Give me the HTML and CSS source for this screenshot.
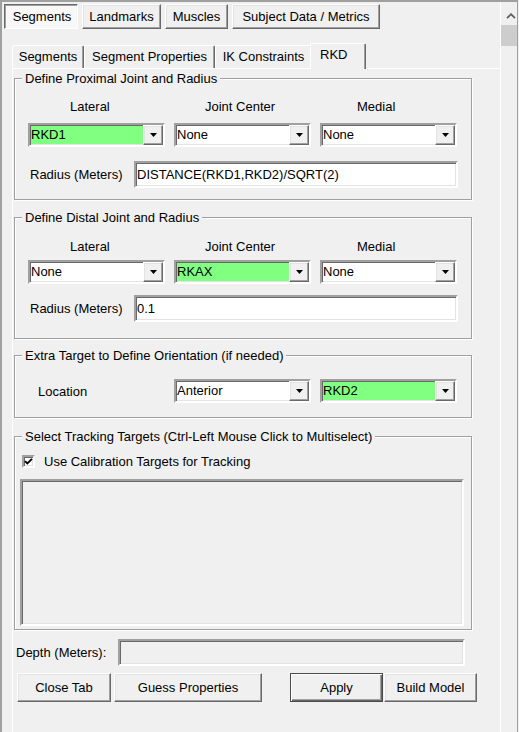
FILE: index.html
```html
<!DOCTYPE html>
<html>
<head>
<meta charset="utf-8">
<title>RKD</title>
<link rel="stylesheet" href="styles.css">
</head>
<body>
<div class="window">
  <div class="content">
    <div class="btn-tabs">
      <div class="btn-tab is-active bt-seg">Segments</div>
      <div class="btn-tab bt-land">Landmarks</div>
      <div class="btn-tab bt-mus">Muscles</div>
      <div class="btn-tab bt-subj">Subject Data / Metrics</div>
    </div>

    <div class="tabctl">
      <div class="tabstrip">
        <div class="tab t-seg">Segments</div>
        <div class="tab t-props">Segment Properties</div>
        <div class="tab t-ik">IK Constraints</div>
        <div class="tab t-rkd is-active">RKD</div>
      </div>

      <div class="page">
        <fieldset class="group g-prox">
          <legend>Define Proximal Joint and Radius</legend>
          <div class="cols heads">
            <span class="head h-lat">Lateral</span>
            <span class="head h-jc">Joint Center</span>
            <span class="head h-med">Medial</span>
          </div>
          <div class="cols combos">
            <div class="combo is-green"><span class="combo-val">RKD1</span><span class="combo-btn"><svg width="7" height="4" viewBox="0 0 7 4"><path d="M0 0H7L3.5 4Z"/></svg></span></div>
            <div class="combo"><span class="combo-val">None</span><span class="combo-btn"><svg width="7" height="4" viewBox="0 0 7 4"><path d="M0 0H7L3.5 4Z"/></svg></span></div>
            <div class="combo"><span class="combo-val">None</span><span class="combo-btn"><svg width="7" height="4" viewBox="0 0 7 4"><path d="M0 0H7L3.5 4Z"/></svg></span></div>
          </div>
          <div class="field-row">
            <span class="field-label">Radius (Meters)</span>
            <div class="textbox">DISTANCE(RKD1,RKD2)/SQRT(2)</div>
          </div>
        </fieldset>

        <fieldset class="group g-dist">
          <legend>Define Distal Joint and Radius</legend>
          <div class="cols heads">
            <span class="head h-lat">Lateral</span>
            <span class="head h-jc">Joint Center</span>
            <span class="head h-med">Medial</span>
          </div>
          <div class="cols combos">
            <div class="combo"><span class="combo-val">None</span><span class="combo-btn"><svg width="7" height="4" viewBox="0 0 7 4"><path d="M0 0H7L3.5 4Z"/></svg></span></div>
            <div class="combo is-green"><span class="combo-val">RKAX</span><span class="combo-btn"><svg width="7" height="4" viewBox="0 0 7 4"><path d="M0 0H7L3.5 4Z"/></svg></span></div>
            <div class="combo"><span class="combo-val">None</span><span class="combo-btn"><svg width="7" height="4" viewBox="0 0 7 4"><path d="M0 0H7L3.5 4Z"/></svg></span></div>
          </div>
          <div class="field-row">
            <span class="field-label">Radius (Meters)</span>
            <div class="textbox">0.1</div>
          </div>
        </fieldset>

        <fieldset class="group g-extra">
          <legend>Extra Target to Define Orientation (if needed)</legend>
          <div class="cols combos">
            <span class="loc-label">Location</span>
            <div class="combo"><span class="combo-val">Anterior</span><span class="combo-btn"><svg width="7" height="4" viewBox="0 0 7 4"><path d="M0 0H7L3.5 4Z"/></svg></span></div>
            <div class="combo is-green"><span class="combo-val">RKD2</span><span class="combo-btn"><svg width="7" height="4" viewBox="0 0 7 4"><path d="M0 0H7L3.5 4Z"/></svg></span></div>
          </div>
        </fieldset>

        <fieldset class="group g-track">
          <legend>Select Tracking Targets (Ctrl-Left Mouse Click to Multiselect)</legend>
          <label class="check-row">
            <span class="checkbox"><svg width="9" height="9" viewBox="0 0 9 9"><path d="M1 4.2L3.3 6.5L8 1.8" fill="none" stroke="#000" stroke-width="1.8"/></svg></span>
            <span>Use Calibration Targets for Tracking</span>
          </label>
          <div class="listbox"></div>
        </fieldset>

        <div class="depth-row">
          <span class="depth-label">Depth (Meters):</span>
          <div class="textbox is-disabled"></div>
        </div>

        <div class="button-row">
          <button class="btn b-close">Close Tab</button>
          <button class="btn b-guess">Guess Properties</button>
          <button class="btn b-apply is-default">Apply</button>
          <button class="btn b-build">Build Model</button>
        </div>
      </div>
    </div>
  </div>

  <div class="scrollbar">
    <div class="sb-up"><svg width="10" height="6" viewBox="0 0 10 6"><path d="M1 5.2L5 1.2L9 5.2" fill="none" stroke="#606060" stroke-width="1.8"/></svg></div>
    <div class="sb-thumb"></div>
  </div>
</div>
</body>
</html>
```

FILE: styles.css
```css
* { box-sizing: border-box; }
html, body { margin: 0; padding: 0; }
body {
  width: 519px;
  height: 732px;
  overflow: hidden;
  background: #f0f0f0;
  font-family: "Liberation Sans", Arial, sans-serif;
  font-size: 13px;
  color: #000;
}

.window {
  display: flex;
  width: 518px;
  height: 732px;
  border-top: 2px solid #a0a0a0;
  border-left: 2px solid #a0a0a0;
  border-right: 1px solid #a0a0a0;
}
.content { flex: 0 0 498px; overflow: hidden; }

/* scrollbar */
.scrollbar {
  flex: 0 0 17px;
  border-left: 1px solid #fff;
  display: flex;
  flex-direction: column;
}
.sb-up { height: 23px; padding: 11px 0 0 5px; }
.sb-up svg { display: block; }
.sb-thumb { height: 21px; background: #cdcdcd; }

/* shared 3D looks */
.btn-tab, .btn, .combo-btn {
  border: 1px solid;
  border-color: #fff #696969 #696969 #fff;
  box-shadow: inset -1px -1px 0 #a0a0a0, inset 1px 1px 0 #e3e3e3;
  background: #f0f0f0;
}
.combo, .textbox, .listbox, .checkbox {
  border: 2px solid;
  border-color: #a0a0a0 #fff #fff #a0a0a0;
  box-shadow: inset 1px 1px 0 #696969, inset -1px -1px 0 #e3e3e3;
}

/* outer button tabs */
.btn-tabs { display: flex; gap: 4px; margin: 2px 0 0 2px; }
.btn-tab { height: 25px; line-height: 23px; text-align: center; }
.btn-tab.is-active {
  border-color: #696969 #fff #fff #696969;
  box-shadow: inset 1px 1px 0 #a0a0a0;
  background: #f8f8f8;
  padding: 1px 0 0 2px;
  line-height: 22px;
}
.bt-seg { width: 74px; }
.bt-land { width: 79px; }
.bt-mus { width: 63px; }
.bt-subj { width: 148px; }

/* inner tab control */
.tabctl { margin: 14px 0 0 10px; }
.tabstrip { display: flex; align-items: flex-end; height: 25px; }
.tab {
  height: 23px;
  line-height: 21px;
  text-align: center;
  border-top: 1px solid #fff;
  border-left: 1px solid #fff;
  border-right: 1px solid #696969;
  border-radius: 2px 2px 0 0;
  box-shadow: inset -1px 0 0 #a0a0a0;
}
.t-seg { width: 72px; }
.t-props { width: 131px; }
.t-ik { width: 97px; }
.t-rkd { width: 56px; }
.tab.is-active {
  position: relative;
  height: 26px;
  margin: 0 0 -1px -2px;
  text-align: left;
  padding-left: 9px;
  line-height: 21px;
  background: #f0f0f0;
}

.page {
  border-top: 1px solid #fff;
  border-left: 1px solid #fff;
  height: 700px;
}

/* group boxes */
.group {
  width: 458px;
  margin: 0 0 0 1px;
  padding: 0;
  min-width: 0;
  border: 1px solid #a0a0a0;
  box-shadow: inset 1px 1px 0 #fff, 1px 1px 0 #fff;
}
.group legend {
  margin-left: 7px;
  padding: 0 3px;
  line-height: 15px;
  background: #f0f0f0;
}
.g-prox { margin-top: 2px; padding-bottom: 11px; }
.g-dist { margin-top: 10px; padding-bottom: 16px; }
.g-extra { margin-top: 9px; padding-bottom: 14px; }
.g-track { margin-top: 11px; padding-bottom: 3px; }

.cols {
  display: grid;
  grid-template-columns: 137px 137px 137px;
  column-gap: 9px;
  margin-left: 13px;
}
.heads { height: 15px; line-height: 15px; }
.h-lat { padding-left: 42px; }
.h-jc { padding-left: 31px; }
.h-med { padding-left: 37px; }
.g-prox .heads { margin-top: 13px; }
.g-prox .combos { margin-top: 9px; }
.g-prox .field-row { margin-top: 14px; }
.g-dist .heads { margin-top: 14px; }
.g-dist .combos { margin-top: 6px; }
.g-dist .field-row { margin-top: 11px; }
.g-extra .combos { margin-top: 16px; align-items: center; }
.loc-label { padding-left: 10px; }

/* combo box */
.combo {
  display: flex;
  height: 24px;
  background: #fff;
}
.combo.is-green { background: #80ff80; }
.combo-val { flex: 1; padding-left: 1px; line-height: 20px; white-space: nowrap; overflow: hidden; }
.combo-btn {
  flex: 0 0 20px;
  display: flex;
  align-items: center;
  justify-content: center;
  padding-left: 1px;
}
.combo-btn svg { display: block; fill: #000; }

/* text fields */
.field-row { display: flex; align-items: center; margin-left: 15px; }
.field-label { width: 104px; }
.textbox {
  width: 324px;
  height: 27px;
  padding-left: 1px;
  line-height: 23px;
  background: #fff;
  white-space: nowrap;
}
.textbox.is-disabled { width: 347px; background: #f0f0f0; }

/* tracking */
.check-row {
  display: flex;
  align-items: center;
  gap: 9px;
  height: 14px;
  margin: 10px 0 0 7px;
}
.checkbox {
  width: 13px;
  height: 13px;
  background: #fff;
  display: flex;
  align-items: center;
  justify-content: center;
}
.checkbox svg { display: block; }
.listbox {
  width: 444px;
  height: 147px;
  margin: 11px 0 0 5px;
  background: #f0f0f0;
}

/* depth */
.depth-row { display: flex; align-items: center; margin: 9px 0 0 3px; }
.depth-label { width: 102px; }

/* buttons */
.button-row { display: flex; margin: 7px 0 0 4px; }
.btn {
  height: 29px;
  font: inherit;
  color: #000;
  padding: 0;
}
.b-close { width: 94px; }
.b-guess { width: 148px; margin-left: 3px; }
.b-apply { width: 93px; margin-left: 28px; }
.b-build { width: 93px; margin-left: 1px; }
.btn.is-default {
  border: 1px solid #4a4a4a;
  box-shadow: inset 1px 1px 0 #fff, inset -1px -1px 0 #696969, inset -2px -2px 0 #a0a0a0;
}
```
